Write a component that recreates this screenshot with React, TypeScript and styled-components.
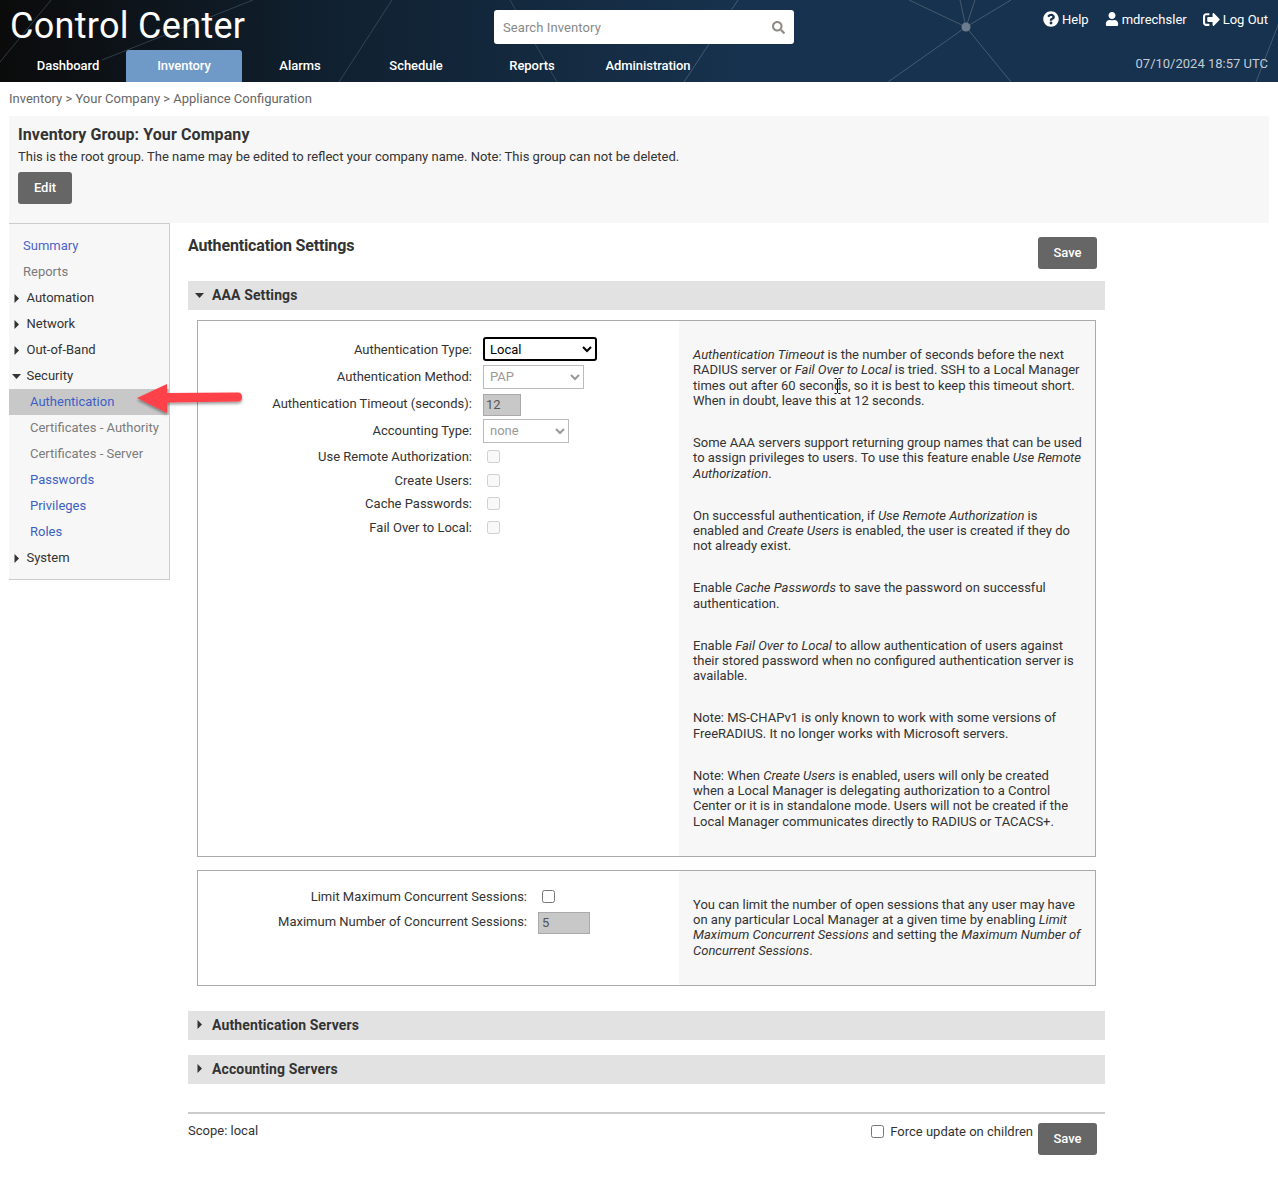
import React from "react";
import styled, { createGlobalStyle } from "styled-components";
import { FaQuestionCircle, FaUser, FaSignOutAlt, FaSearch } from "react-icons/fa";

const Global = createGlobalStyle`
  html, body { margin: 0; padding: 0; background: #fff; }
  body { font-family: Roboto, "Liberation Sans", sans-serif; font-size: 13px; color: #333; }
  * { box-sizing: border-box; }
`;

const Page = styled.div`
  position: relative;
  width: 1278px;
  height: 1180px;
  overflow: hidden;
`;

const Header = styled.header`
  position: relative;
  height: 82px;
  background: linear-gradient(90deg, #0b0b0b 0%, #10202f 25%, #17324e 58%, #17324e 100%);
  overflow: hidden;
`;

const HeaderArt = styled.svg`
  position: absolute;
  inset: 0;
  pointer-events: none;
`;

const HeaderTop = styled.div`
  position: relative;
  display: grid;
  grid-template-columns: 494px 300px 1fr;
  height: 50px;
`;

const Title = styled.h1`
  margin: 0;
  padding: 5px 0 0 10px;
  font-size: 36px;
  line-height: 42px;
  font-weight: 400;
  letter-spacing: 0.3px;
  color: #fff;
  white-space: nowrap;
`;

const SearchBox = styled.div`
  display: flex;
  align-items: center;
  justify-content: space-between;
  margin-top: 10px;
  height: 34px;
  padding: 0 9px;
  background: #fff;
  border-radius: 3px;
  color: #888;
  font-size: 13px;
  letter-spacing: 0.1px;
`;

const UserLinks = styled.div`
  display: flex;
  justify-content: flex-end;
  gap: 16px;
  padding: 9px 10px 0 0;
`;

const UserLink = styled.span`
  display: inline-flex;
  align-items: center;
  gap: 3px;
  height: 20px;
  color: #fff;
  font-size: 13px;
  white-space: nowrap;
`;

const NavRow = styled.nav`
  position: relative;
  display: flex;
  height: 32px;
  padding-left: 10px;
`;

const Tab = styled.div<{ $active?: boolean }>`
  width: 116px;
  display: flex;
  align-items: center;
  justify-content: center;
  padding-bottom: 2px;
  color: #fff;
  font-size: 13px;
  font-weight: 500;
  letter-spacing: -0.05px;
  border-radius: 3px 3px 0 0;
  background: ${(p) => (p.$active ? "#6f9ac8" : "transparent")};
`;

const DateText = styled.div`
  margin-left: auto;
  padding: 6px 10px 0 0;
  font-size: 13px;
  color: #c3ccd5;
`;

const Crumbs = styled.div`
  height: 34px;
  padding: 9px 0 0 9px;
  line-height: 15px;
  color: #666;
  font-size: 13px;
`;

const Body = styled.div`
  padding: 0 9px;
`;

const GroupPanel = styled.section`
  height: 107px;
  padding: 9px 9px 0;
  background: #f7f7f7;
`;

const GroupTitle = styled.h2`
  margin: 0;
  font-size: 16px;
  line-height: 20px;
  font-weight: 700;
  letter-spacing: 0.1px;
`;

const GroupText = styled.p`
  margin: 4px 0 8px;
  line-height: 15px;
`;

const Button = styled.button`
  display: block;
  height: 32px;
  padding: 0 0 2px;
  border: 0;
  border-radius: 3px;
  background: #666;
  color: #fff;
  font: 500 13px Roboto, sans-serif;
`;

const EditButton = styled(Button)`
  width: 54px;
`;

const SaveButton = styled(Button)`
  width: 59px;
  flex: none;
`;

const FootSaveButton = styled(SaveButton)`
  padding-bottom: 0;
`;

const Columns = styled.div`
  position: relative;
  display: grid;
  grid-template-columns: 161px 917px;
  column-gap: 18px;
  align-items: start;
`;

const Side = styled.aside`
  height: 357px;
  padding-top: 9px;
  background: #f7f7f7;
  border: 1px solid #ccc;
  border-left: 0;
`;

const SideItem = styled.div<{ $indent: number; $tone: string; $active?: boolean }>`
  position: relative;
  height: 26px;
  line-height: 26px;
  padding-left: ${(p) => p.$indent}px;
  color: ${(p) => p.$tone};
  background: ${(p) => (p.$active ? "#c8c8c8" : "transparent")};
  white-space: nowrap;
`;

const Caret = styled.svg`
  position: absolute;
  top: 9px;
  left: 3px;
`;

const Arrow = styled.svg`
  position: absolute;
  left: 128px;
  top: 161px;
  overflow: visible;
`;

const Main = styled.main`
  padding-top: 14px;
`;

const MainHead = styled.div`
  display: flex;
  justify-content: space-between;
  height: 44px;
  padding-right: 8px;
`;

const MainTitle = styled.h2`
  margin: 0;
  font-size: 16px;
  line-height: 18px;
  font-weight: 700;
  letter-spacing: -0.15px;
`;

const Bar = styled.div<{ $gap?: number }>`
  display: flex;
  align-items: center;
  gap: 8px;
  height: 29px;
  margin-bottom: ${(p) => p.$gap ?? 15}px;
  padding: 0 0 1px 7px;
  background: #e2e2e2;
  font-size: 14px;
  font-weight: 700;
  letter-spacing: 0.12px;
  color: #333;
`;

const BarCaret = styled.svg`
  flex: none;
  width: 9px;
  height: 9px;
`;

const SettingsBox = styled.div<{ $gap: number }>`
  display: grid;
  grid-template-columns: 481px 1fr;
  width: 899px;
  margin: 0 0 ${(p) => p.$gap}px 9px;
  border: 1px solid #aaa;
`;

const FormSide = styled.div<{ $top: number }>`
  padding-top: ${(p) => p.$top}px;
`;

const Row = styled.div<{ $h: number; $label: number }>`
  display: grid;
  grid-template-columns: ${(p) => p.$label}px 1fr;
  column-gap: 11px;
  align-items: center;
  height: ${(p) => p.$h}px;
`;

const Label = styled.label`
  text-align: right;
  white-space: nowrap;
`;

const NativeSelect = styled.select<{ $w: number }>`
  display: block;
  width: ${(p) => p.$w}px;
  height: 24px;
  padding: 0 2px;
  background: #fff;
  border: 1px solid #bbb;
  border-radius: 0;
  color: #999;
  font: 13px Roboto, sans-serif;
  opacity: 1;
`;

const FocusSelect = styled(NativeSelect)`
  border: 2px solid #000;
  border-radius: 3px;
  color: #000;
  padding: 0 1px;
`;

const ReadOnlyInput = styled.input<{ $w: number; $pad: number }>`
  display: block;
  width: ${(p) => p.$w}px;
  height: 22px;
  margin-top: 2px;
  padding: 0 ${(p) => p.$pad}px;
  background: #c8c8c8;
  border: 1px solid #aaa;
  color: #555;
  font: 13px Roboto, sans-serif;
`;

const Check = styled.input<{ $x?: number }>`
  display: block;
  width: 13px;
  height: 13px;
  margin: 0 0 0 ${(p) => p.$x ?? 4}px;
`;

const Help = styled.div`
  position: relative;
  padding: 26px 12px 0 14px;
  background: #f7f7f7;
  line-height: 15.33px;
`;

const HelpPara = styled.p`
  margin: 0 0 26.7px;
`;

const Cursor = styled.svg`
  position: absolute;
  left: 155px;
  top: 57px;
`;

const FootRule = styled.div`
  height: 2px;
  margin-top: 28px;
  background: #ccc;
`;

const Foot = styled.div`
  display: flex;
  justify-content: space-between;
  padding: 9px 8px 0 0;
`;

const Scope = styled.div`
  line-height: 15px;
`;

const FootRight = styled.div`
  display: flex;
  gap: 5px;
`;

const ForceLabel = styled.label`
  display: flex;
  gap: 6px;
  line-height: 15px;
  height: 18px;
  align-items: center;
`;

const ForceText = styled.span`
  margin-top: -1px;
`;

const down = <polygon points="0,2 9,2 4.5,7" fill="#333" />;
const right = <polygon points="2.5,0 7,4.5 2.5,9" fill="#333" />;

const sideItems: { t: string; indent: number; tone: string; caret?: "r" | "d"; active?: boolean }[] = [
  { t: "Summary", indent: 14, tone: "#4d63c9" },
  { t: "Reports", indent: 14, tone: "#7b7b7b" },
  { t: "Automation", indent: 17.5, tone: "#333", caret: "r" },
  { t: "Network", indent: 17.5, tone: "#333", caret: "r" },
  { t: "Out-of-Band", indent: 17.5, tone: "#333", caret: "r" },
  { t: "Security", indent: 17.5, tone: "#333", caret: "d" },
  { t: "Authentication", indent: 21, tone: "#3d5fc4", active: true },
  { t: "Certificates - Authority", indent: 21, tone: "#7b7b7b" },
  { t: "Certificates - Server", indent: 21, tone: "#7b7b7b" },
  { t: "Passwords", indent: 21, tone: "#3d5fc4" },
  { t: "Privileges", indent: 21, tone: "#3d5fc4" },
  { t: "Roles", indent: 21, tone: "#3d5fc4" },
  { t: "System", indent: 17.5, tone: "#333", caret: "r" },
];

const lines = [
  [966, 27, 909, 0], [966, 27, 960, 0], [966, 27, 975, 0], [966, 27, 1011, 0],
  [966, 27, 888, 82], [966, 27, 1011, 82], [738, 0, 684, 82], [1280, 20, 1256, 82],
  [392, 0, 339, 82], [510, 0, 557, 82], [51, 0, 0, 62], [253, 0, 102, 60],
];

export default function App() {
  return (
    <Page>
      <Global />
      <Header>
        <HeaderArt width="1278" height="82">
          {lines.map((l, i) => (
            <line key={i} x1={l[0]} y1={l[1]} x2={l[2]} y2={l[3]} stroke="#55677a" strokeOpacity={l[0] > 600 ? 0.75 : 0.5} strokeWidth="1" />
          ))}
          <circle cx="966" cy="27" r="4.5" fill="#6b7c8c" />
        </HeaderArt>
        <HeaderTop>
          <Title>Control Center</Title>
          <SearchBox>
            Search Inventory
            <FaSearch size={13} color="#8f8a85" />
          </SearchBox>
          <UserLinks>
            <UserLink><FaQuestionCircle size={16} />Help</UserLink>
            <UserLink><FaUser size={14} />mdrechsler</UserLink>
            <UserLink><FaSignOutAlt size={17} />Log Out</UserLink>
          </UserLinks>
        </HeaderTop>
        <NavRow>
          <Tab>Dashboard</Tab>
          <Tab $active>Inventory</Tab>
          <Tab>Alarms</Tab>
          <Tab>Schedule</Tab>
          <Tab>Reports</Tab>
          <Tab>Administration</Tab>
          <DateText>07/10/2024 18:57 UTC</DateText>
        </NavRow>
      </Header>
      <Crumbs>Inventory &gt; Your Company &gt; Appliance Configuration</Crumbs>
      <Body>
        <GroupPanel>
          <GroupTitle>Inventory Group: Your Company</GroupTitle>
          <GroupText>This is the root group. The name may be edited to reflect your company name. Note: This group can not be deleted.</GroupText>
          <EditButton>Edit</EditButton>
        </GroupPanel>
        <Columns>
          <Side>
            {sideItems.map((s) => (
              <SideItem key={s.t} $indent={s.indent} $tone={s.tone} $active={s.active}>
                {s.caret && <Caret width="9" height="9" viewBox="0 0 9 9">{s.caret === "r" ? right : down}</Caret>}
                {s.t}
              </SideItem>
            ))}
          </Side>
          <Arrow width="108" height="32" viewBox="0 0 108 32">
            <defs>
              <filter id="arrowShadow" x="-10%" y="-30%" width="120%" height="170%">
                <feDropShadow dx="0" dy="2" stdDeviation="1.5" floodColor="#000" floodOpacity="0.4" />
              </filter>
            </defs>
            <path d="M0 14 L30 0 L30 9 L101 8.5 Q105 8.5 105 13 Q105 17.5 101 17.5 L30 18.5 L30 29 Z" fill="#ff4248" filter="url(#arrowShadow)" />
          </Arrow>
          <Main>
            <MainHead>
              <MainTitle>Authentication Settings</MainTitle>
              <SaveButton>Save</SaveButton>
            </MainHead>
            <Bar $gap={10}>
              <BarCaret viewBox="0 0 9 9">{down}</BarCaret>
              AAA Settings
            </Bar>
            <SettingsBox $gap={13}>
              <FormSide $top={14}>
                <Row $h={28} $label={274}>
                  <Label>Authentication Type:</Label>
                  <FocusSelect $w={114} defaultValue="Local"><option>Local</option></FocusSelect>
                </Row>
                <Row $h={27} $label={274}>
                  <Label>Authentication Method:</Label>
                  <NativeSelect $w={101} disabled><option>PAP</option></NativeSelect>
                </Row>
                <Row $h={27} $label={274}>
                  <Label>Authentication Timeout (seconds):</Label>
                  <ReadOnlyInput $w={38} $pad={2} readOnly value="12" />
                </Row>
                <Row $h={27} $label={274}>
                  <Label>Accounting Type:</Label>
                  <NativeSelect $w={86} disabled><option>none</option></NativeSelect>
                </Row>
                <Row $h={24} $label={274}>
                  <Label>Use Remote Authorization:</Label>
                  <Check type="checkbox" disabled />
                </Row>
                <Row $h={24} $label={274}>
                  <Label>Create Users:</Label>
                  <Check type="checkbox" disabled />
                </Row>
                <Row $h={23} $label={274}>
                  <Label>Cache Passwords:</Label>
                  <Check type="checkbox" disabled />
                </Row>
                <Row $h={24} $label={274}>
                  <Label>Fail Over to Local:</Label>
                  <Check type="checkbox" disabled />
                </Row>
              </FormSide>
              <Help>
                <HelpPara><i>Authentication Timeout</i> is the number of seconds before the next RADIUS server or <i>Fail Over to Local</i> is tried. SSH to a Local Manager times out after 60 seconds, so it is best to keep this timeout short. When in doubt, leave this at 12 seconds.</HelpPara>
                <Cursor width="7" height="16" viewBox="0 0 7 16">
                  <path d="M0.5 0.5h2l1 1 1-1h2M3.5 1.5v13M0.5 15.5h2l1-1 1 1h2" fill="none" stroke="#111" strokeWidth="1" />
                </Cursor>
                <HelpPara>Some AAA servers support returning group names that can be used to assign privileges to users. To use this feature enable <i>Use Remote Authorization</i>.</HelpPara>
                <HelpPara>On successful authentication, if <i>Use Remote Authorization</i> is enabled and <i>Create Users</i> is enabled, the user is created if they do not already exist.</HelpPara>
                <HelpPara>Enable <i>Cache Passwords</i> to save the password on successful authentication.</HelpPara>
                <HelpPara>Enable <i>Fail Over to Local</i> to allow authentication of users against their stored password when no configured authentication server is available.</HelpPara>
                <HelpPara>Note: MS-CHAPv1 is only known to work with some versions of FreeRADIUS. It no longer works with Microsoft servers.</HelpPara>
                <HelpPara>Note: When <i>Create Users</i> is enabled, users will only be created when a Local Manager is delegating authorization to a Control Center or it is in standalone mode. Users will not be created if the Local Manager communicates directly to RADIUS or TACACS+.</HelpPara>
              </Help>
            </SettingsBox>
            <SettingsBox $gap={25}>
              <FormSide $top={13}>
                <Row $h={25} $label={329}>
                  <Label>Limit Maximum Concurrent Sessions:</Label>
                  <Check type="checkbox" />
                </Row>
                <Row $h={26} $label={329}>
                  <Label>Maximum Number of Concurrent Sessions:</Label>
                  <ReadOnlyInput $w={52} $pad={3} readOnly value="5" />
                </Row>
              </FormSide>
              <Help>
                <HelpPara>You can limit the number of open sessions that any user may have on any particular Local Manager at a given time by enabling <i>Limit Maximum Concurrent Sessions</i> and setting the <i>Maximum Number of Concurrent Sessions</i>.</HelpPara>
              </Help>
            </SettingsBox>
            <Bar>
              <BarCaret viewBox="0 0 9 9">{right}</BarCaret>
              Authentication Servers
            </Bar>
            <Bar $gap={0}>
              <BarCaret viewBox="0 0 9 9">{right}</BarCaret>
              Accounting Servers
            </Bar>
            <FootRule />
            <Foot>
              <Scope>Scope: local</Scope>
              <FootRight>
                <ForceLabel><Check type="checkbox" $x={0} /><ForceText>Force update on children</ForceText></ForceLabel>
                <FootSaveButton>Save</FootSaveButton>
              </FootRight>
            </Foot>
          </Main>
        </Columns>
      </Body>
    </Page>
  );
}
